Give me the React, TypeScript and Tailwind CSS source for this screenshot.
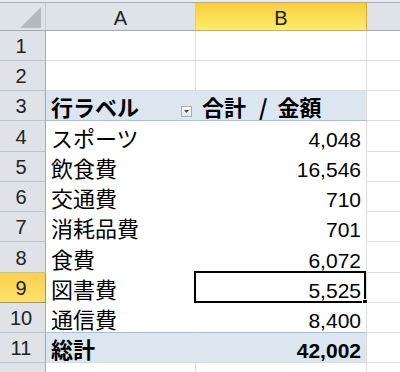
import React from "react";

type Row = {
  n: number;
  h: number;
  label?: string;
  value?: string;
  kind?: "head" | "body" | "total";
};

const rows: Row[] = [
  { n: 1, h: 30 },
  { n: 2, h: 30 },
  { n: 3, h: 30, label: "行ラベル", kind: "head" },
  { n: 4, h: 31, label: "スポーツ", value: "4,048", kind: "body" },
  { n: 5, h: 30, label: "飲食費", value: "16,546", kind: "body" },
  { n: 6, h: 30, label: "交通費", value: "710", kind: "body" },
  { n: 7, h: 30, label: "消耗品費", value: "701", kind: "body" },
  { n: 8, h: 31, label: "食費", value: "6,072", kind: "body" },
  { n: 9, h: 30, label: "図書費", value: "5,525", kind: "body" },
  { n: 10, h: 30, label: "通信費", value: "8,400", kind: "body" },
  { n: 11, h: 30, label: "総計", value: "42,002", kind: "total" },
];

const jp = "font-['Noto_Sans_CJK_JP',sans-serif]";
const num = "font-['Liberation_Sans','Noto_Sans_CJK_JP',sans-serif]";

const DropButton = () => (
  <div className="mb-[3px] mr-[3px] flex h-[11px] w-[11px] items-center justify-center border border-[#a9adb3] bg-linear-to-b from-white to-[#e4e6e9]">
    <svg width="5" height="3" viewBox="0 0 5 3">
      <path d="M0 0 L5 0 L2.5 3 Z" fill="#4a4a4a" />
    </svg>
  </div>
);

const SheetRow = ({ row }: { row: Row }) => {
  const selected = row.n === 9;
  const pivot = !!row.kind;
  const blue = row.kind === "head" || row.kind === "total";
  const bottomLine =
    row.kind === "head" || row.n === 10
      ? "border-b-[#a7bfde]"
      : row.kind === "body"
        ? "border-b-white"
        : "border-b-[#dadcdd]";
  const cellBg = blue ? "bg-[#dce6f1]" : "bg-white";
  const bold = blue ? "font-bold" : "";

  return (
    <div className="flex" style={{ height: row.h }}>
      <div
        className={
          selected
            ? "flex w-[46px] shrink-0 items-center justify-center border-r border-b border-r-[#c2901f] border-b-[#c2901f] bg-linear-to-b from-[#fbd04c] to-[#fde16c] pr-[3px] pt-[1px] font-['Liberation_Sans',sans-serif] text-[20px] text-[#222]"
            : "flex w-[46px] shrink-0 items-center justify-center border-r border-b border-r-[#9eaab8] border-b-[#b9c2cc] bg-[#dfe3e8] pr-[3px] pt-[1px] font-['Liberation_Sans',sans-serif] text-[20px] text-[#222]"
        }
      >
        {row.n}
      </div>
      <div
        className={`flex w-[150px] shrink-0 items-end justify-between border-r border-b ${cellBg} ${bottomLine} ${
          pivot ? (blue ? "border-r-[#dce6f1]" : "border-r-white") : "border-r-[#dadcdd]"
        }`}
      >
        {row.label && (
          <span className={`${jp} ${bold} pb-[3px] pl-[5px] text-[22px] leading-none text-black`}>
            {row.label}
          </span>
        )}
        {row.kind === "head" && <DropButton />}
      </div>
      <div
        className={`relative flex w-[171px] shrink-0 items-end border-r border-b border-r-[#dadcdd] ${cellBg} ${bottomLine} ${
          row.kind === "head" ? "justify-start" : "justify-end"
        }`}
      >
        {row.kind === "head" && (
          <span className={`${jp} flex pb-[3px] pl-[6px] text-[22px] leading-none font-bold text-black`}>
            <span>合計</span>
            <span className="mr-[10px] ml-[13px]">/</span>
            <span>金額</span>
          </span>
        )}
        {row.kind && row.kind !== "head" && (
          <span className={`${num} ${bold} pb-[1px] pr-[5px] text-[21px] leading-none text-black`}>
            {row.value}
          </span>
        )}
        {selected && (
          <div className="absolute -top-[2px] -bottom-[1px] -left-[2px] right-0 border-2 border-black">
            <div className="absolute -right-[4px] -bottom-[4px] h-[6px] w-[6px] border border-white bg-black" />
          </div>
        )}
      </div>
      <div className="flex-1 border-b border-b-[#dadcdd] bg-white" />
    </div>
  );
};

export default function App() {
  return (
    <div className="h-[372px] w-[400px] overflow-hidden bg-white">
      <div className="bg-[#e9ecf0] pt-[2px]">
        <div className="flex h-[29px] border-t border-t-[#a3acb8]">
          <div className="flex w-[46px] shrink-0 items-end justify-end border-r border-b border-r-[#c3cad3] border-b-[#9eaab8] bg-[#dfe3e8] pr-[4px] pb-[2px]">
            <svg width="21" height="21" viewBox="0 0 21 21">
              <path d="M21 0 L21 21 L0 21 Z" fill="#b3b9c1" />
            </svg>
          </div>
          <div className="flex w-[150px] shrink-0 items-center justify-center border-r border-b border-r-[#c3cad3] border-b-[#9eaab8] bg-[#dfe3e8] pt-[2px] font-['Liberation_Sans',sans-serif] text-[20px] text-[#222]">
            A
          </div>
          <div className="flex w-[171px] shrink-0 items-center justify-center border-r border-b border-[#e2a93a] bg-linear-to-b from-[#f8cd3c] to-[#ffec6a] pt-[2px] font-['Liberation_Sans',sans-serif] text-[20px] text-[#222]">
            B
          </div>
          <div className="flex-1 border-b border-b-[#9eaab8] bg-[#dfe3e8]" />
        </div>
      </div>
      {rows.map((r) => (
        <SheetRow key={r.n} row={r} />
      ))}
      <div className="flex h-[10px]">
        <div className="w-[46px] shrink-0 border-r border-r-[#9eaab8] bg-[#dfe3e8]" />
        <div className="w-[150px] shrink-0 border-r border-r-[#dadcdd]" />
        <div className="w-[171px] shrink-0 border-r border-r-[#dadcdd]" />
        <div className="flex-1" />
      </div>
    </div>
  );
}
